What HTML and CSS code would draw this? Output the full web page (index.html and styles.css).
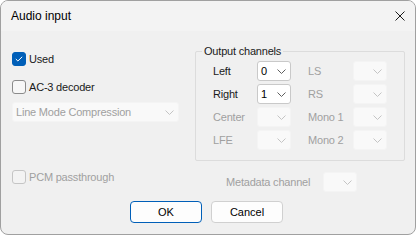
FILE: index.html
```html
<!DOCTYPE html>
<html lang="en">
<head>
<meta charset="UTF-8">
<title>Audio input</title>
<link rel="stylesheet" href="styles.css">
</head>
<body>
<div class="window">
    <div class="titlebar">
        <span class="title">Audio input</span>
        <svg class="close" width="10" height="10" viewBox="0 0 10 10"><path d="M0.5 0.5 L9.5 9.5 M9.5 0.5 L0.5 9.5" stroke="#1b1b1b" stroke-width="1"/></svg>
    </div>
    <div class="content">
        <div class="main">
            <div class="left">
                <label class="check used"><span class="box checked"><svg width="8" height="6" viewBox="0 0 8 6"><path d="M0.8 3 L2.9 5 L7.2 0.8" fill="none" stroke="#fff" stroke-width="1"/></svg></span>Used</label>
                <label class="check ac3"><span class="box"></span>AC-3 decoder</label>
                <div class="combo wide disabled"><span>Line Mode Compression</span><svg width="9" height="5" viewBox="0 0 9 5"><path d="M0.5 0.5 L4.5 4.5 L8.5 0.5" fill="none" stroke="currentColor"/></svg></div>
            </div>
            <div class="group">
                <span class="legend">Output channels</span>
                <div class="grid">
                    <span class="lbl">Left</span>
                    <div class="combo"><span>0</span><svg width="9" height="5" viewBox="0 0 9 5"><path d="M0.5 0.5 L4.5 4.5 L8.5 0.5" fill="none" stroke="currentColor"/></svg></div>
                    <span class="lbl off">LS</span>
                    <div class="combo disabled"><span></span><svg width="9" height="5" viewBox="0 0 9 5"><path d="M0.5 0.5 L4.5 4.5 L8.5 0.5" fill="none" stroke="currentColor"/></svg></div>

                    <span class="lbl">Right</span>
                    <div class="combo"><span>1</span><svg width="9" height="5" viewBox="0 0 9 5"><path d="M0.5 0.5 L4.5 4.5 L8.5 0.5" fill="none" stroke="currentColor"/></svg></div>
                    <span class="lbl off">RS</span>
                    <div class="combo disabled"><span></span><svg width="9" height="5" viewBox="0 0 9 5"><path d="M0.5 0.5 L4.5 4.5 L8.5 0.5" fill="none" stroke="currentColor"/></svg></div>

                    <span class="lbl off">Center</span>
                    <div class="combo disabled"><span></span><svg width="9" height="5" viewBox="0 0 9 5"><path d="M0.5 0.5 L4.5 4.5 L8.5 0.5" fill="none" stroke="currentColor"/></svg></div>
                    <span class="lbl off">Mono 1</span>
                    <div class="combo disabled"><span></span><svg width="9" height="5" viewBox="0 0 9 5"><path d="M0.5 0.5 L4.5 4.5 L8.5 0.5" fill="none" stroke="currentColor"/></svg></div>

                    <span class="lbl off">LFE</span>
                    <div class="combo disabled"><span></span><svg width="9" height="5" viewBox="0 0 9 5"><path d="M0.5 0.5 L4.5 4.5 L8.5 0.5" fill="none" stroke="currentColor"/></svg></div>
                    <span class="lbl off">Mono 2</span>
                    <div class="combo disabled"><span></span><svg width="9" height="5" viewBox="0 0 9 5"><path d="M0.5 0.5 L4.5 4.5 L8.5 0.5" fill="none" stroke="currentColor"/></svg></div>
                </div>
            </div>
        </div>
        <div class="lower">
            <label class="check off pcm"><span class="box"></span>PCM passthrough</label>
            <div class="meta">
                <span class="lbl off">Metadata channel</span>
                <div class="combo disabled"><span></span><svg width="9" height="5" viewBox="0 0 9 5"><path d="M0.5 0.5 L4.5 4.5 L8.5 0.5" fill="none" stroke="currentColor"/></svg></div>
            </div>
        </div>
        <div class="buttons">
            <button class="btn default">OK</button>
            <button class="btn">Cancel</button>
        </div>
    </div>
</div>
</body>
</html>
```

FILE: styles.css
```css
body {
    margin: 0;
    background-color: #fff;
    font-family: "Liberation Sans", Arial, sans-serif;
    font-size: 11px;
    letter-spacing: -0.2px;
    color: #1a1a1a;
}

.window {
    width: 416px;
    height: 235px;
    box-sizing: border-box;
    border: 1px solid #a0a0a0;
    border-radius: 8px;
    background-color: #f0f0f0;
    overflow: hidden;
}

.titlebar {
    height: 30px;
    display: flex;
    align-items: center;
    justify-content: space-between;
    padding: 0 10px 0 10px;
    background-color: #f3f3f3;
}

.title {
    font-size: 12px;
    letter-spacing: 0;
    color: #000;
}

.content {
    padding: 20px 0 0 11px;
}

.main {
    display: flex;
    gap: 16px;
}

.left {
    width: 167px;
    display: flex;
    flex-direction: column;
}

.check {
    display: flex;
    align-items: center;
    gap: 3px;
    height: 14px;
    line-height: 14px;
}

.check.used {
    margin-top: 1px;
}

.check.ac3 {
    margin-top: 14px;
}

.check.off {
    color: #a0a0a0;
}

.box {
    width: 14px;
    height: 14px;
    box-sizing: border-box;
    border: 1px solid #8b8b8b;
    border-radius: 3px;
    background-color: #f7f7f7;
    display: flex;
    align-items: center;
    justify-content: center;
}

.box.checked {
    background-color: #005fb8;
    border-color: #005fb8;
}

.check.off .box {
    border-color: #c5c5c5;
    background-color: #f3f3f3;
}

.combo {
    width: 34px;
    height: 20px;
    box-sizing: border-box;
    border: 1px solid #c9c9c9;
    border-radius: 3px;
    background-color: #fff;
    display: flex;
    align-items: center;
    justify-content: space-between;
    padding: 0 4px 0 3px;
    color: #5f5f5f;
}

.combo span {
    color: #000;
}

.combo.disabled {
    background-color: #f9f9f9;
    border-color: #f4f4f4;
    color: #c4c4c4;
}

.combo.disabled span {
    color: #a0a0a0;
}

.combo.wide {
    width: 167px;
    margin-top: 8px;
}

.group {
    position: relative;
    width: 210px;
    box-sizing: border-box;
    border: 1px solid #dcdcdc;
    border-radius: 2px;
    padding: 9px 16px 10px 17px;
}

.legend {
    position: absolute;
    top: -7px;
    left: 6px;
    padding: 0 2px;
    background-color: #f0f0f0;
    line-height: 12px;
}

.grid {
    display: grid;
    grid-template-columns: 44px 51px 45px 34px;
    grid-auto-rows: 20px;
    row-gap: 3px;
    align-items: center;
}

.lbl.off {
    color: #a0a0a0;
}

.lower {
    display: flex;
    gap: 16px;
    margin-top: 9px;
}

.check.pcm {
    width: 167px;
}

.meta {
    display: flex;
    align-items: center;
    margin-top: 2px;
    padding-left: 31px;
}

.meta .lbl {
    width: 97px;
}

.buttons {
    display: flex;
    gap: 9px;
    margin-top: 9px;
    padding-left: 118px;
}

.btn {
    width: 72px;
    height: 22px;
    box-sizing: border-box;
    border: 1px solid #d0d0d0;
    border-radius: 4px;
    background-color: #fdfdfd;
    font-family: "Liberation Sans", Arial, sans-serif;
    font-size: 11px;
    color: #000;
    padding: 0;
}

.btn.default {
    border-color: #005fb8;
}
```
